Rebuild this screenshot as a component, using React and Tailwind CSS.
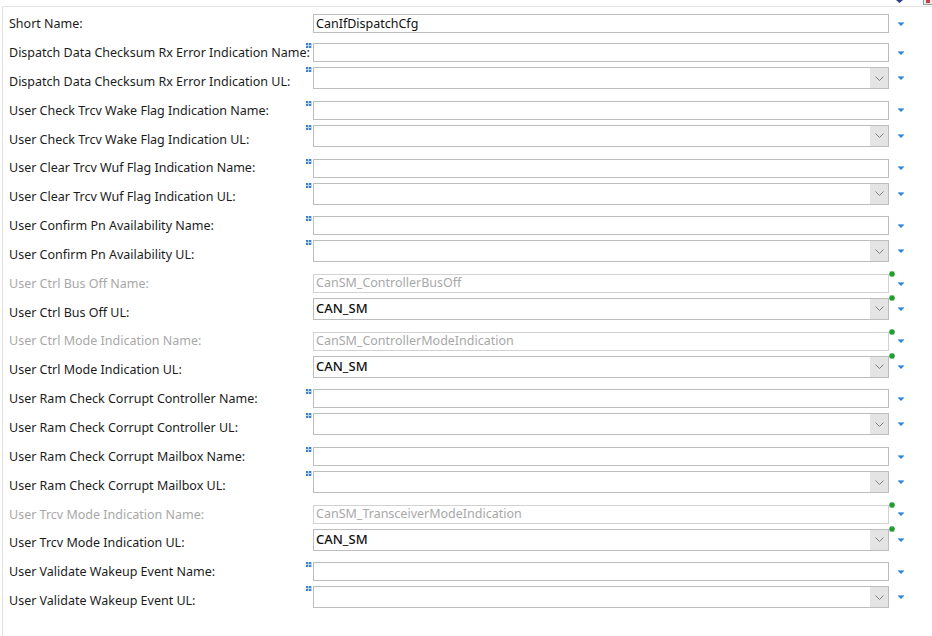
import React from "react";

const rows = [
  { label: "Short Name:", kind: "text", value: "CanIfDispatchCfg", plain: true },
  { label: "Dispatch Data Checksum Rx Error Indication Name:", kind: "text" },
  { label: "Dispatch Data Checksum Rx Error Indication UL:", kind: "combo" },
  { label: "User Check Trcv Wake Flag Indication Name:", kind: "text" },
  { label: "User Check Trcv Wake Flag Indication UL:", kind: "combo" },
  { label: "User Clear Trcv Wuf Flag Indication Name:", kind: "text" },
  { label: "User Clear Trcv Wuf Flag Indication UL:", kind: "combo" },
  { label: "User Confirm Pn Availability Name:", kind: "text" },
  { label: "User Confirm Pn Availability UL:", kind: "combo" },
  { label: "User Ctrl Bus Off Name:", kind: "text", value: "CanSM_ControllerBusOff", disabled: true },
  { label: "User Ctrl Bus Off UL:", kind: "combo", value: "CAN_SM", star: true },
  { label: "User Ctrl Mode Indication Name:", kind: "text", value: "CanSM_ControllerModeIndication", disabled: true },
  { label: "User Ctrl Mode Indication UL:", kind: "combo", value: "CAN_SM", star: true },
  { label: "User Ram Check Corrupt Controller Name:", kind: "text" },
  { label: "User Ram Check Corrupt Controller UL:", kind: "combo" },
  { label: "User Ram Check Corrupt Mailbox Name:", kind: "text" },
  { label: "User Ram Check Corrupt Mailbox UL:", kind: "combo" },
  { label: "User Trcv Mode Indication Name:", kind: "text", value: "CanSM_TransceiverModeIndication", disabled: true },
  { label: "User Trcv Mode Indication UL:", kind: "combo", value: "CAN_SM", star: true },
  { label: "User Validate Wakeup Event Name:", kind: "text" },
  { label: "User Validate Wakeup Event UL:", kind: "combo" },
];

function LinkIcon() {
  return (
    <svg className="absolute left-[-8px] top-[-1px]" width="6" height="5" viewBox="0 0 6 5">
      <rect x="0" y="0" width="6" height="5" fill="#bcd6f2" />
      <rect x="0" y="0" width="2" height="2" fill="#3a7fd0" />
      <rect x="3" y="0" width="2" height="2" fill="#3a7fd0" />
      <rect x="0" y="3" width="2" height="2" fill="#3a7fd0" />
      <rect x="3" y="3" width="2" height="2" fill="#3a7fd0" />
    </svg>
  );
}

function Star() {
  return (
    <svg className="absolute right-[-7px] top-[-4px]" width="6" height="6" viewBox="0 0 6 6">
      <path d="M3 0v6M0 3h6M0.8 0.8l4.4 4.4M5.2 0.8l-4.4 4.4" stroke="#1f9a2c" strokeWidth="1.3" />
    </svg>
  );
}

function BlueArrow() {
  return (
    <svg width="6" height="4" viewBox="0 0 6 4">
      <rect x="0" y="0" width="6" height="1" fill="#7fb6ec" />
      <path d="M0 1h6L3 4z" fill="#2a86e0" />
    </svg>
  );
}

function Chevron() {
  return (
    <svg width="9" height="5" viewBox="0 0 9 5">
      <path d="M0.5 0.5l4 4 4-4" fill="none" stroke="#808080" strokeWidth="1" />
    </svg>
  );
}

function Row({ row }) {
  const isCombo = row.kind === "combo";
  return (
    <div className="flex h-[28.85px]">
      <div
        className={
          "w-[301px] self-center pl-[6px] pt-[1px] whitespace-nowrap " +
          (row.disabled ? "text-[#a8a8a8]" : "text-[#1c1c1c]")
        }
      >
        {row.label}
      </div>
      <div className={"flex w-[576px] ml-[9px] " + (isCombo ? "items-start" : "items-center")}>
        <div
          className={
            "relative w-full flex items-center border " +
            (isCombo ? "h-[22px] " : "h-[19px] ") +
            (row.disabled ? "border-[#d2d2d2] text-[#a8a8a8]" : "border-[#bdbdbd] text-[#111]")
          }
        >
          {!row.plain && !row.disabled && !row.star && <LinkIcon />}
          {(row.disabled || row.star) && <Star />}
          <span className={"flex-1 pl-[2px] " + (isCombo ? "font-medium text-[13px]" : "")}>
            {row.value}
          </span>
          {isCombo && (
            <div className="h-full w-[18px] bg-[#e4e4e4] flex items-center justify-center">
              <Chevron />
            </div>
          )}
        </div>
      </div>
      <div className={"flex w-[16px] pl-[9px] " + (isCombo ? "items-start pt-[9px]" : "items-center")}>
        <BlueArrow />
      </div>
    </div>
  );
}

export default function App() {
  return (
    <div
      className="relative w-[932px] h-[636px] bg-white overflow-hidden text-[12.5px] leading-none"
      style={{ fontFamily: '"Noto Sans", "Liberation Sans", sans-serif' }}
    >
      <div className="absolute top-0 left-[896px]">
        <svg width="7" height="3" viewBox="0 0 7 3">
          <path d="M0 0h7L3.5 3z" fill="#2b3f8a" />
        </svg>
      </div>
      <div className="absolute top-[-2px] left-[923px] w-[10px] h-[7px] border border-[#9a9a9a] bg-[#e8e8f0]">
        <div className="ml-[2px] mt-[1px] w-[4px] h-[3px] bg-[#c04040]" />
      </div>
      <div className="mt-[6px] ml-[2px] h-[630px] border-t border-l border-[#e2e2e2] pt-[2.5px]">
        {rows.map((r) => (
          <Row key={r.label} row={r} />
        ))}
      </div>
    </div>
  );
}
